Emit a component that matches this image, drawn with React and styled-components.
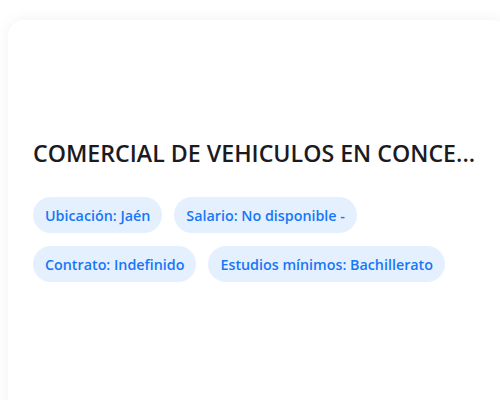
import React from 'react';
import styled, { createGlobalStyle } from 'styled-components';

const GlobalStyle = createGlobalStyle`
  body {
    margin: 0;
    background: #ffffff;
    font-family: "Open Sans", "Noto Sans", sans-serif;
  }
`;

const Page = styled.div`
  padding: 20px 0 0 8px;
  height: 400px;
  box-sizing: border-box;
  overflow: hidden;
`;

// Tarjeta de la oferta con sombra suave
const Card = styled.div`
  width: 500px;
  min-height: 420px;
  box-sizing: border-box;
  padding: 117px 25px 24px;
  background: #ffffff;
  border-radius: 16px;
  box-shadow: 0 0 16px rgba(0, 0, 0, 0.06);
`;

const Title = styled.h2`
  margin: 0 0 28px;
  font-size: 23.2px;
  line-height: 32px;
  font-weight: 600;
  color: #1b1b1f;
  white-space: nowrap;
`;

const Tags = styled.div`
  display: flex;
  flex-wrap: wrap;
  gap: 13px 12px;
`;

const Tag = styled.span`
  display: inline-flex;
  align-items: center;
  height: 36px;
  padding: 0 12px;
  border-radius: 18px;
  background: #e5f0ff;
  color: #1677f7;
  font-size: 14.3px;
  font-weight: 600;
`;

const datos = [
  'Ubicación: Jaén',
  'Salario: No disponible -',
  'Contrato: Indefinido',
  'Estudios mínimos: Bachillerato',
];

export default function App() {
  return (
    <>
      <GlobalStyle />
      <Page>
        <Card>
          <Title>COMERCIAL DE VEHICULOS EN CONCE...</Title>
          <Tags>
            {datos.map((d) => (
              <Tag key={d}>{d}</Tag>
            ))}
          </Tags>
        </Card>
      </Page>
    </>
  );
}
